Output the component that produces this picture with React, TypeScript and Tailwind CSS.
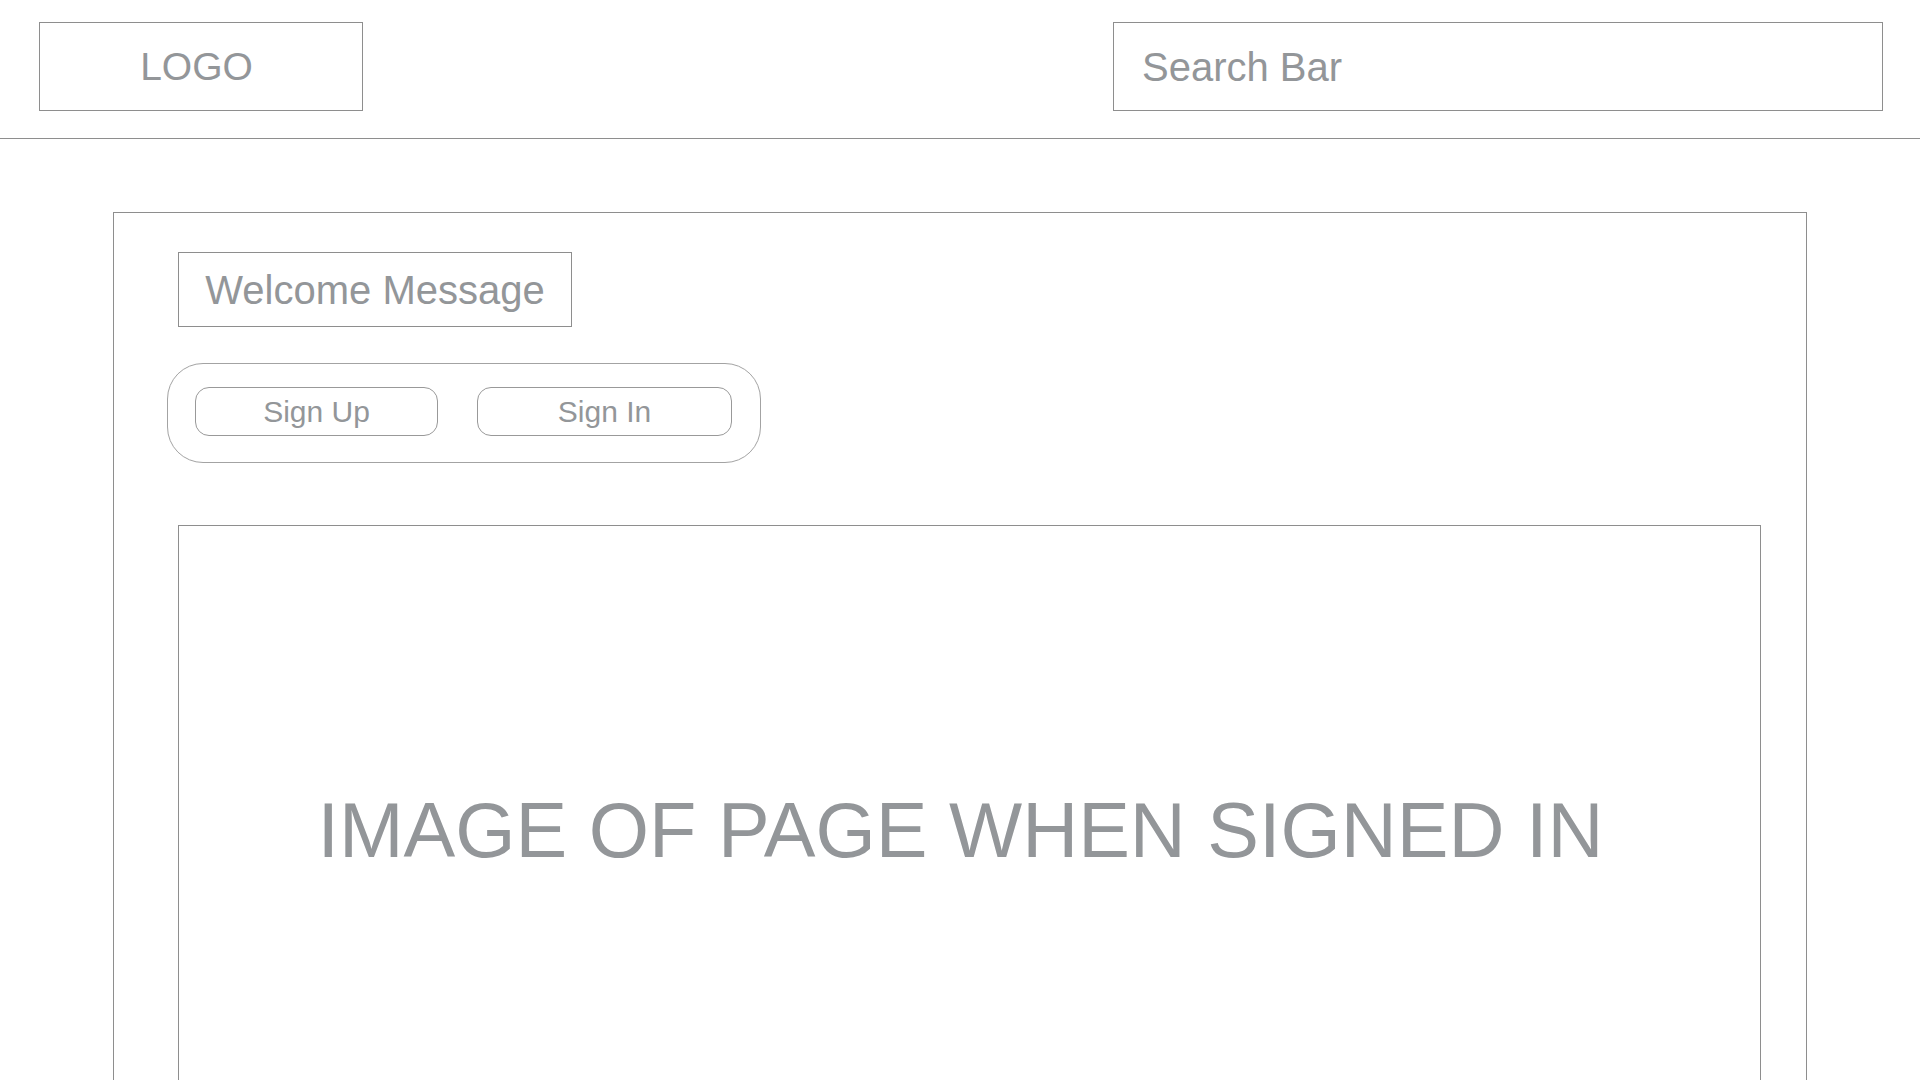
import React from 'react';

const font = { fontFamily: '"Liberation Sans", Arial, Helvetica, sans-serif' };

const Header = () => (
  <header className="flex items-start justify-between border-b border-[#8e8e8e] pt-[22px] pb-[27px] pl-[39px] pr-[37px]">
    <div className="flex h-[89px] w-[324px] items-center justify-center border border-[#8e8e8e] pr-[9px] text-[39px] leading-none text-[#939699]">
      LOGO
    </div>
    <div className="flex h-[89px] w-[770px] items-center border border-[#8e8e8e] pl-[28px] text-[40px] leading-none text-[#939699]">
      Search Bar
    </div>
  </header>
);

const AuthButtons = () => (
  <div className="ml-[-11px] flex h-[100px] w-[594px] items-start gap-[39px] rounded-[36px] border border-[#a3a3a3] pl-[27px] pt-[23px]">
    <button className="flex h-[49px] w-[243px] items-center justify-center rounded-[14px] border border-[#999999] text-[30px] leading-none text-[#939699]">
      Sign Up
    </button>
    <button className="flex h-[49px] w-[255px] items-center justify-center rounded-[14px] border border-[#999999] text-[30px] leading-none text-[#939699]">
      Sign In
    </button>
  </div>
);

export default function App() {
  return (
    <div className="h-screen overflow-hidden bg-white" style={font}>
      <Header />
      <main className="mx-[113px] mt-[73px] border border-[#8e8e8e] pl-[64px] pr-[45px] pt-[39px] pb-[60px]">
        <div className="flex h-[75px] w-[394px] items-center justify-center border border-[#8e8e8e] text-[40px] leading-none text-[#939699]">
          Welcome Message
        </div>
        <div className="mt-[36px]">
          <AuthButtons />
        </div>
        <div className="mt-[62px] flex h-[612px] items-center justify-center border border-[#8e8e8e] pr-[18px] text-[77.5px] leading-none text-[#939699]">
          IMAGE OF PAGE WHEN SIGNED IN
        </div>
      </main>
    </div>
  );
}
